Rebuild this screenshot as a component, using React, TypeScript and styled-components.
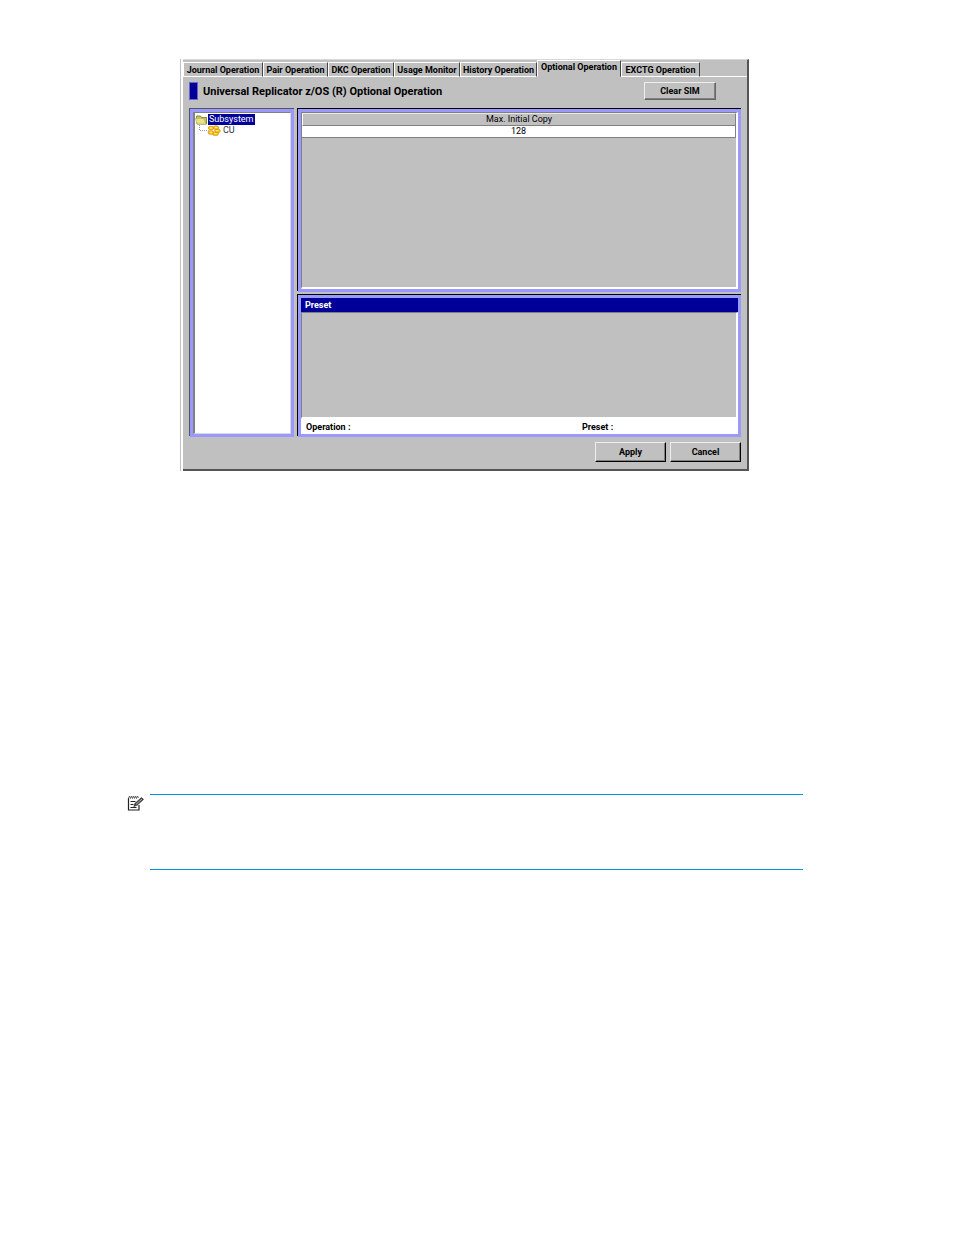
import React, { useState } from "react";
import styled, { createGlobalStyle, css } from "styled-components";

const GlobalStyle = createGlobalStyle`
  * { box-sizing: border-box; }
  body { margin: 0; background: #fff; }
  button { font: inherit; color: inherit; }
`;

const FACE = "#c0c0c0";
const LAVENDER = "#9999ff";
const NAVY = "#000099";

const Page = styled.main`
  font-family: Roboto, "Liberation Sans", Arial, sans-serif;
  font-size: 9px;
  line-height: 12px;
  color: #000;
  padding: 59px 151px 0 127px;
`;

const Figure = styled.section`
  margin: 0 54px 0 53px;
  padding-left: 2px;
  border-left: 1px solid ${FACE};
`;

const Window = styled.div`
  background: ${FACE};
  border-top: 1px solid #d8d8d8;
  border-right: 2px solid #555;
  border-bottom: 2px solid #555;
`;

const TabBar = styled.div`
  display: flex;
  align-items: flex-end;
  height: 17px;
`;

const TabFiller = styled.div`
  flex: 1;
  height: 1px;
  background: #fff;
`;

const Tab = styled.button<{ $active: boolean; $width: number }>`
  width: ${(p) => p.$width}px;
  flex: none;
  height: 15px;
  padding: 2px 0 0;
  border: 1px solid #fff;
  border-right-color: #444;
  background: ${FACE};
  font-weight: bold;
  line-height: 11px;
  text-align: center;
  white-space: nowrap;
  ${(p) =>
    p.$active &&
    css`
      height: 17px;
      padding: 0 0 2px;
      line-height: 13px;
      border-bottom-color: ${FACE};
    `}
`;

const Header = styled.header`
  display: flex;
  align-items: center;
  height: 32px;
  padding: 0 31px 4px 6px;
`;

const Marker = styled.span`
  width: 9px;
  height: 18px;
  border: 1px solid #6666cc;
  background: ${NAVY};
`;

const Title = styled.h1`
  flex: 1;
  margin: 0 0 0 5px;
  padding-top: 2px;
  font-size: 11px;
  line-height: 14px;
  white-space: nowrap;
`;

const PushButton = styled.button<{ $strong?: boolean }>`
  width: ${(p) => (p.$strong ? 71 : 72)}px;
  height: ${(p) => (p.$strong ? 20 : 18)}px;
  padding: 0;
  border: 1px solid #eee;
  border-right: 1px solid ${(p) => (p.$strong ? "#000" : "#666")};
  border-bottom: 1px solid ${(p) => (p.$strong ? "#000" : "#666")};
  box-shadow: inset -1px -1px #808080;
  background: ${FACE};
  font-weight: bold;
`;

const Body = styled.div`
  display: grid;
  grid-template-columns: 104px minmax(0, 1fr);
  gap: 4px;
  padding: 0 6px 0 7px;
`;

const Column = styled.div`
  display: flex;
  flex-direction: column;
  gap: 3px;
`;

const Pane = styled.div<{ $height?: number; $edge?: string }>`
  height: ${(p) => (p.$height ? `${p.$height}px` : "auto")};
  display: flex;
  flex-direction: column;
  border: 3px solid ${LAVENDER};
  box-shadow: -1px -1px ${(p) => p.$edge || "#000"}, 0 -1px ${(p) => p.$edge || "#000"};
`;

const Tree = styled.ul`
  flex: 1;
  margin: 0;
  padding: 1px 0;
  list-style: none;
  background: #fff;
  border: 1px solid #808080;
  border-left-width: 2px;
  border-right: 1px solid #d8d8d8;
  border-bottom: 1px solid #d8d8d8;
`;

const TreeItem = styled.li<{ $child?: boolean }>`
  display: flex;
  align-items: center;
  height: 11px;
  padding-left: ${(p) => (p.$child ? 3 : 0)}px;
  color: ${(p) => (p.$child ? "#333" : "#fff")};
`;

const TreeLabel = styled.span<{ $selected?: boolean }>`
  height: 11px;
  margin-left: 1px;
  padding: 0 1px;
  line-height: 11px;
  background: ${(p) => (p.$selected ? NAVY : "transparent")};
`;

const Inset = styled.div`
  flex: 1;
  border: 1px solid #808080;
  border-right: 2px solid #fff;
  border-bottom: 2px solid #fff;
`;

const Table = styled.table`
  width: 100%;
  border-collapse: separate;
  border-spacing: 0;

  th,
  td {
    padding: 0;
    text-align: center;
    font-weight: normal;
    height: 12px;
    line-height: 11px;
    border-right: 1px solid #808080;
    border-bottom: 1px solid #808080;
  }
  th {
    height: 13px;
    border-top: 1px solid #e8e8e8;
    border-left: 1px solid #fff;
  }
  td {
    background: #fff;
  }
`;

const PaneTitle = styled.h2`
  margin: 0;
  padding: 0 4px;
  height: 14px;
  background: ${NAVY};
  color: #fff;
  font-size: 9px;
  line-height: 15px;
`;

const Status = styled.div`
  display: grid;
  grid-template-columns: 276px 1fr;
  height: 15px;
  padding: 0 5px;
  background: #fff;
  font-weight: bold;
  line-height: 16px;
`;

const Actions = styled.div`
  display: flex;
  justify-content: flex-end;
  gap: 4px;
  padding: 5px 6px 7px;
`;

const Note = styled.aside`
  display: flex;
  align-items: flex-start;
  gap: 6px;
  margin-top: 323px;
`;

const NoteBody = styled.div`
  flex: 1;
  height: 76px;
  border-top: 1px solid #0096d6;
  border-bottom: 1px solid #0096d6;
`;

const FolderIcon = () => (
  <svg width="12" height="10" viewBox="0 0 12 10" aria-hidden="true">
    <path d="M1.500 1h4l1 1.500h5V9H2z" fill="#c9c45c" stroke="#8a8840" />
    <path d="M0 3.500h8.500L11 9H2.500z" fill="#e6e38a" stroke="#b5b160" strokeWidth=".6" />
  </svg>
);

const UnitIcon = () => (
  <svg width="23" height="11" viewBox="0 0 23 11" aria-hidden="true">
    <path d="M1.500 0v5.500h9" fill="none" stroke="#999" strokeDasharray="1 1" />
    <g fill="#ffc320" stroke="#c08a00" strokeWidth=".6">
      <ellipse cx="17.500" cy="8.700" rx="3" ry="1.900" />
      <ellipse cx="19.500" cy="5.800" rx="2.800" ry="1.900" />
      <ellipse cx="18" cy="2.600" rx="2.800" ry="1.900" />
      <ellipse cx="12.800" cy="7.500" rx="2.800" ry="1.900" />
      <ellipse cx="13" cy="3" rx="2.800" ry="1.900" />
    </g>
    <path d="M12 3h2M17 2.500h2M18 5.500h2M12 7.300h2M16.500 8.500h2" stroke="#fff19a" />
  </svg>
);

const NoteIcon = () => (
  <svg width="17" height="18" viewBox="0 0 17 18" aria-hidden="true">
    <path
      d="M1.500 4v12h10.500V11M3.500 7.500h5M3.500 10.500h3M3.500 13.500h6"
      fill="none"
      stroke="#222"
      strokeWidth="1.200"
    />
    <path
      d="M1.500 4.500l1-2.500 1 2.500 1-2.500 1 2.500 1-2.500 1 2.500 1-2.500 1 2.500 1-2.500 1 2"
      fill="none"
      stroke="#444"
      strokeWidth=".8"
    />
    <path d="M6.800 12.500l1.200-3.200L14.500 3.500l2 1.900-6.500 5.900z" fill="#444" stroke="#222" strokeWidth=".6" />
    <path d="M9 10.300l6-5.300" stroke="#ccc" strokeWidth=".8" />
  </svg>
);

const TABS = [
  { label: "Journal Operation", width: 80 },
  { label: "Pair Operation", width: 65 },
  { label: "DKC Operation", width: 66 },
  { label: "Usage Monitor", width: 66 },
  { label: "History Operation", width: 77 },
  { label: "Optional Operation", width: 84 },
  { label: "EXCTG Operation", width: 79 },
];

export default function App() {
  const [active, setActive] = useState("Optional Operation");
  return (
    <Page>
      <GlobalStyle />
      <Figure>
        <Window>
          <TabBar role="tablist">
            {TABS.map((t) => (
              <Tab
                key={t.label}
                role="tab"
                aria-selected={t.label === active}
                $active={t.label === active}
                $width={t.width}
                onClick={() => setActive(t.label)}
              >
                {t.label}
              </Tab>
            ))}
            <TabFiller />
          </TabBar>
          <Header>
            <Marker />
            <Title>Universal Replicator z/OS (R) Optional Operation</Title>
            <PushButton>Clear SIM</PushButton>
          </Header>
          <Body>
            <Pane $edge="#555">
              <Tree>
                <TreeItem>
                  <FolderIcon />
                  <TreeLabel $selected>Subsystem</TreeLabel>
                </TreeItem>
                <TreeItem $child>
                  <UnitIcon />
                  <TreeLabel>CU</TreeLabel>
                </TreeItem>
              </Tree>
            </Pane>
            <Column>
              <Pane $height={183}>
                <Inset>
                  <Table>
                    <thead>
                      <tr>
                        <th scope="col">Max. Initial Copy</th>
                      </tr>
                    </thead>
                    <tbody>
                      <tr>
                        <td>128</td>
                      </tr>
                    </tbody>
                  </Table>
                </Inset>
              </Pane>
              <Pane $height={142}>
                <PaneTitle>Preset</PaneTitle>
                <Inset />
                <Status>
                  <span>Operation :</span>
                  <span>Preset :</span>
                </Status>
              </Pane>
            </Column>
          </Body>
          <Actions>
            <PushButton $strong>Apply</PushButton>
            <PushButton $strong>Cancel</PushButton>
          </Actions>
        </Window>
      </Figure>
      <Note>
        <NoteIcon />
        <NoteBody />
      </Note>
    </Page>
  );
}
